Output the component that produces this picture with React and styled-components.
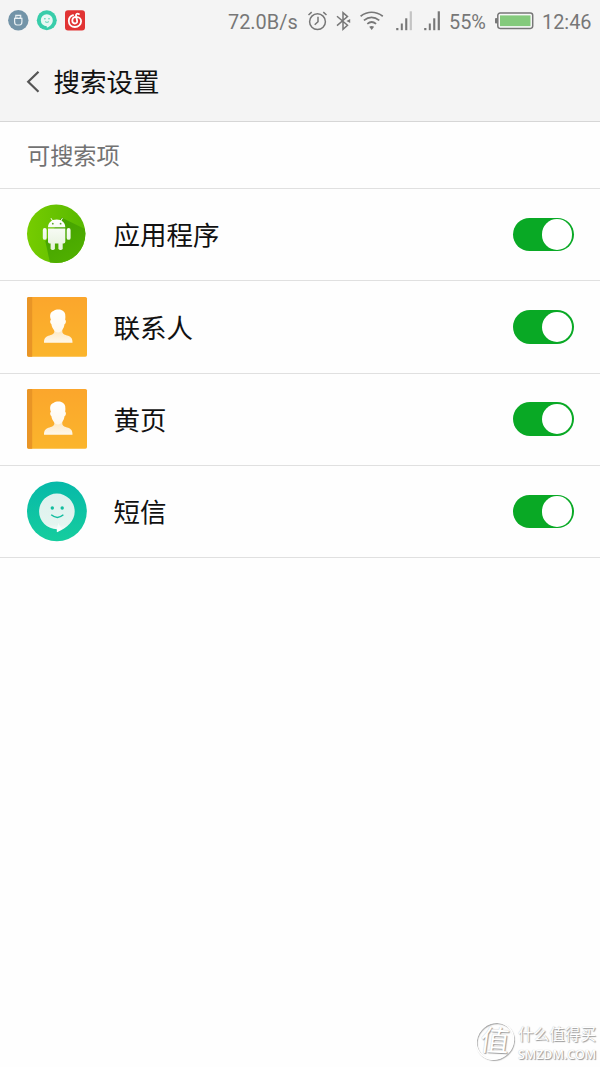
import React from "react";
import styled, { createGlobalStyle } from "styled-components";

const GlobalStyle = createGlobalStyle`
  body { margin: 0; background: #fff; }
  * { box-sizing: border-box; }
  svg { display: block; flex: none; overflow: visible; }
`;

const Screen = styled.main`
  position: relative;
  width: 600px;
  height: 1067px;
  overflow: hidden;
  background: #fefefe;
  color: #111;
  font-family: Roboto, "Noto Sans CJK SC", sans-serif;
`;
const Top = styled.header`
  height: 122px;
  background: #f4f4f4;
  border-bottom: 1.5px solid #d6d6d6;
`;
const StatusBar = styled.div`
  display: flex;
  justify-content: space-between;
  height: 42px;
  padding: 0 8px;
`;
const Notifications = styled.div`
  display: flex;
  align-items: center;
  gap: 8px;
  height: 41px;
`;
const Indicators = styled.div`
  display: flex;
  align-items: center;
  width: 364px;
  height: 42px;
`;
const StatusText = styled.span`
  width: ${(p) => p.$width}px;
  margin-right: ${(p) => p.$gap || 0}px;
  font-size: 19.9px;
  line-height: 24px;
  padding-top: 4px;
  color: #777;
  white-space: nowrap;
`;
const IndicatorSlot = styled.span`
  margin-right: ${(p) => p.$gap}px;
`;
const TitleBar = styled.div`
  display: flex;
  align-items: center;
  height: 78px;
  padding: 1px 0 0 26px;
`;
const Title = styled.h1`
  margin: 0 0 0 13.5px;
  padding-top: 2px;
  font-size: 26.5px;
  line-height: 40px;
  font-weight: 400;
`;
const SectionLabel = styled.h2`
  display: flex;
  align-items: center;
  margin: 0;
  height: 67px;
  padding: 0 0 2.5px 27px;
  font-size: 23.2px;
  font-weight: 400;
  color: #727272;
  border-bottom: 1px solid #e0e0e0;
`;
const List = styled.ul`
  margin: 0;
  padding: 0;
  list-style: none;
`;
const Row = styled.li`
  display: flex;
  align-items: center;
  height: 92.3px;
  padding: 0 26px 0 26.5px;
  border-bottom: 1px solid #e0e0e0;
`;
const RowLabel = styled.span`
  flex: 1;
  margin-left: 27px;
  font-size: 26.5px;
  line-height: 40px;
  padding-top: 3.2px;
`;
const Switch = styled.button`
  display: flex;
  justify-content: flex-end;
  align-items: center;
  width: 61px;
  height: 33.5px;
  padding: 0 2px;
  border: 0;
  border-radius: 17px;
  background: #09a925;
`;
const Knob = styled.span`
  width: 30.5px;
  height: 30.5px;
  border-radius: 50%;
  background: #fff;
`;
const Watermark = styled.div`
  position: absolute;
  left: 476px;
  bottom: 3px;
  display: flex;
  align-items: center;
  gap: 4px;
  color: #fff;
  text-shadow: 1px 1px 1px #999, 0 0 1px #bbb;
`;
const Seal = styled.span`
  display: flex;
  align-items: center;
  justify-content: center;
  width: 38px;
  height: 38px;
  border: 1.5px solid #fff;
  border-radius: 50%;
  box-shadow: 1px 1px 1px #aaa, inset 1px 1px 1px #aaa;
  font-size: 29px;
  line-height: 34px;
  transform: rotate(3deg) skewX(-5deg);
`;
const Brand = styled.span`
  display: flex;
  flex-direction: column;
  padding-top: 8px;
  font-size: 15.6px;
  font-weight: 400;
  line-height: 21px;
  white-space: nowrap;
`;
const Domain = styled.span`
  font-family: "Open Sans", sans-serif;
  font-size: 12.4px;
  font-weight: 600;
  line-height: 18px;
`;

const UsbIcon = () => (
  <svg width="21" height="21" viewBox="0 0 21 21">
    <circle cx="10.3" cy="10.3" r="10.2" fill="#7394a8" />
    <g fill="none" stroke="#e8eff2" strokeWidth="1.2">
      <path d="M7.8 8.3V5.4h4.9v2.9M6.6 8.4h7.3v3.4c0 2-.9 3.2-2.3 3.2H8.9c-1.4 0-2.3-1.2-2.3-3.2Z" />
      <path d="M9.3 6.7v.8M11.3 6.7v.8" />
    </g>
  </svg>
);
const ChatBadge = () => (
  <svg width="20" height="21" viewBox="0 0 20 21">
    <circle cx="9.8" cy="10.3" r="10" fill="#38cdaa" />
    <path d="M9.8 4.2a6 6 0 1 0 0 12v1.5c3.5-1.2 6-4 6-7.5a6 6 0 0 0-6-6Z" fill="#e9f8f4" />
    <circle cx="7.9" cy="8.8" r=".7" fill="#38cdaa" />
    <circle cx="12" cy="8.8" r=".7" fill="#38cdaa" />
    <path d="M8 11.7q2 1.4 4 0" fill="none" stroke="#38cdaa" strokeWidth=".8" />
  </svg>
);
const MusicIcon = () => (
  <svg width="20" height="21" viewBox="0 0 20 21">
    <rect y=".2" width="20" height="20.3" rx="3" fill="#e13434" />
    <path d="M8.1 5.2C5.2 6.1 3.8 8.4 3.8 11c0 3.5 2.6 6 6.1 6s6.2-2.5 6.2-5.7c0-2.6-2.1-4.5-4.8-4.5-2.4 0-4 1.6-4 3.8 0 1.8 1.1 2.9 2.5 2.9 1.6 0 2.6-1.1 2.3-2.7L11 5.8c-.3-1.7.9-2.7 2.9-1.7" fill="none" stroke="#fff" strokeWidth="1.8" strokeLinecap="round" />
  </svg>
);
const AlarmIcon = () => (
  <svg width="20" height="20" viewBox="0 0 20 20" fill="none" stroke="#777" strokeWidth="1.5">
    <circle cx="9.5" cy="10.7" r="7.9" />
    <path d="M10 5.7v5l-3.3 3.1M.5 4l3.2-2.9M15.3 1.1 18.5 4" />
  </svg>
);
const BluetoothIcon = () => (
  <svg width="15" height="20" viewBox="0 0 15 20" fill="none" stroke="#777" strokeWidth="1.5">
    <path d="m1 5.3 10.5 9L7 18.4V1.6l4.5 4-10.5 9" />
    <path d="m10.4 10 3.8-2v4Z" fill="#777" stroke="none" />
  </svg>
);
const WifiIcon = () => (
  <svg width="24" height="20" viewBox="0 0 24 20" fill="none" stroke="#777" strokeWidth="1.7">
    <path d="M.6 5.2Q11.5-2.7 22.8 5.2M3.9 9.3q7.6-6 15.4 0M7.3 12.8q4.4-3.6 8.8 0" />
    <path d="M9.2 15.8q2.5-1.6 4.9 0l-2.4 3.2Z" fill="#777" stroke="none" />
  </svg>
);
const SignalIcon = ({ last }) => (
  <svg width="17" height="20" viewBox="0 0 17 20" fill="#777">
    <rect x=".2" y="17" width="2.2" height="2.2" />
    <rect x="4.8" y="12.5" width="2" height="6.7" />
    <rect x="9.2" y="7.3" width="2.1" height="11.9" />
    <rect x="13.7" y=".3" width="2.2" height="18.9" fill={last} />
  </svg>
);
const BatteryIcon = () => (
  <svg width="39" height="18" viewBox="0 0 39 18">
    <rect x="2.8" y="1" width="34.9" height="15.4" rx="2.3" fill="#f8f8f8" stroke="#777" strokeWidth="1.5" />
    <rect x="0" y="6" width="2.3" height="5.5" rx="1" fill="#777" />
    <rect x="5" y="3.4" width="30.5" height="10.7" fill="#84ca7c" />
  </svg>
);
const BackIcon = () => (
  <svg width="14" height="22" viewBox="0 0 14 22" fill="none" stroke="#555" strokeWidth="2.2">
    <path d="M12.5.8 2.2 10.8l10.3 10" />
  </svg>
);
const AndroidIcon = () => (
  <svg width="60" height="60" viewBox="0.6 0.4 60 60">
    <defs>
      <linearGradient id="appGreen" x1="0" x2="1"><stop stopColor="#76cc00" /><stop offset="1" stopColor="#57b800" /></linearGradient>
      <linearGradient id="appBody" gradientUnits="userSpaceOnUse" x1="0" y1="15" x2="0" y2="46"><stop stopColor="#fff" /><stop offset="1" stopColor="#e4f1da" /></linearGradient>
      <linearGradient id="appShade" x1="0" y1="0" x2=".5" y2="1"><stop stopColor="#429f00" /><stop offset="1" stopColor="#50b000" /></linearGradient>
      <clipPath id="appDisk"><circle cx="29.8" cy="29.2" r="29.2" /></clipPath>
    </defs>
    <circle cx="29.8" cy="29.2" r="29.2" fill="url(#appGreen)" />
    <path clipPath="url(#appDisk)" d="M35 13 60 25v35H24l-5-23Z" fill="url(#appShade)" />
    <g fill="url(#appBody)">
      <path d="M21.6 22.6C21.8 18.3 25 15 30.3 15s8.4 3.3 8.6 7.6Z" />
      <path d="M21.6 23.8h17.3v13.4q0 1.7-1.7 1.7H23.3q-1.7 0-1.7-1.7Z" />
      <rect x="16.4" y="23.5" width="3.9" height="11.7" rx="1.9" />
      <rect x="40.3" y="23.5" width="3.9" height="11.7" rx="1.9" />
      <rect x="24.2" y="36" width="4.3" height="9.5" rx="1.8" />
      <rect x="32" y="36" width="4.3" height="9.5" rx="1.8" />
    </g>
    <path d="m24.6 13.6 2 3.4M36 13.6l-2 3.4" stroke="#fff" strokeWidth="1" />
    <g fill="#58a72c"><circle cx="26.4" cy="19.1" r=".9" /><circle cx="34.2" cy="19.1" r=".9" /></g>
  </svg>
);
const ContactIcon = () => (
  <svg width="60" height="60" viewBox="0.3 0.3 60 60">
    <defs>
      <linearGradient id="contactOrange" x1="0" y1="0" x2="0" y2="1"><stop stopColor="#fba62c" /><stop offset="1" stopColor="#fbb52c" /></linearGradient>
      <linearGradient id="contactSkin" x1="0" y1="0" x2="0" y2="1"><stop stopColor="#fff" /><stop offset="1" stopColor="#fff8ec" /></linearGradient>
      <linearGradient id="contactShoulders" x1="0" y1="0" x2="0" y2="1"><stop stopColor="#fce3b8" /><stop offset="1" stopColor="#fff8ea" /></linearGradient>
    </defs>
    <rect x=".3" y=".2" width="60" height="59.8" rx="1.6" fill="url(#contactOrange)" />
    <path d="M2 .2h3.5V60H2Q.3 60 .3 58V2Q.3.2 2 .2Z" fill="#e99526" />
    <path d="M17.3 46c0-4.1 1.4-5.7 4.4-6.9 3.3-1.2 5.9-1.8 5.9-4.4V30h8v4.7c0 2.6 2.6 3.2 5.9 4.4 3 1.2 4.3 2.8 4.3 6.9Z" fill="url(#contactShoulders)" />
    <path d="M24.7 27.6c-1.3-1.1-1.8-3.7-.5-4.6-1.6-4.2-.7-7.8 2.5-8.8 4.4-2.8 11-1.3 11.8 3.4.3 1.8.2 3.7 0 5.4 1.3.9.8 3.7-.7 4.6-.4 2.8-1.1 4-2 5.3-1.5 2.3-2.9 2.9-4.4 2.9s-2.9-.6-4.2-2.4c-1.1-1.6-2.2-3-2.5-5.8Z" fill="url(#contactSkin)" />
  </svg>
);
const MessageIcon = () => (
  <svg width="60" height="60" viewBox="0.3 0.5 60 60">
    <defs>
      <linearGradient id="messageTeal" x1="0" y1="0" x2="0" y2="1"><stop stopColor="#06b9a9" /><stop offset="1" stopColor="#16cd9e" /></linearGradient>
      <linearGradient id="messageBubble" x1="0" y1="0" x2="0" y2="1"><stop stopColor="#def1ee" /><stop offset=".8" stopColor="#e4f5f0" /><stop offset="1" stopColor="#fff" /></linearGradient>
    </defs>
    <circle cx="30.2" cy="29.9" r="29.9" fill="url(#messageTeal)" />
    <path d="M30.2 12.1a17.8 17.8 0 1 0 0 35.6v3C40.7 46.5 48 39.3 48 29.9a17.8 17.8 0 0 0-17.8-17.8Z" fill="url(#messageBubble)" />
    <path d="M30.2 47.7q.7-3.6 1.4-6.1l3.4 5.8-4.8 3.3Z" fill="#fff" opacity=".55" />
    <g fill="#13bd9f"><circle cx="25.6" cy="26.5" r="1.7" /><circle cx="35.5" cy="26.5" r="1.7" /></g>
    <path d="M24.5 33.3q6.2 5.2 12.2 0" fill="none" stroke="#13bd9f" strokeWidth="1.4" />
  </svg>
);

const items = [
  ["应用程序", AndroidIcon],
  ["联系人", ContactIcon],
  ["黄页", ContactIcon],
  ["短信", MessageIcon],
];

export default function App() {
  return (
    <Screen>
      <GlobalStyle />
      <Top>
        <StatusBar>
          <Notifications><UsbIcon /><ChatBadge /><MusicIcon /></Notifications>
          <Indicators>
            <StatusText $width={69} $gap={11}>72.0B/s</StatusText>
            <IndicatorSlot $gap={8}><AlarmIcon /></IndicatorSlot>
            <IndicatorSlot $gap={9}><BluetoothIcon /></IndicatorSlot>
            <IndicatorSlot $gap={12}><WifiIcon /></IndicatorSlot>
            <IndicatorSlot $gap={11}><SignalIcon last="#c4c4c4" /></IndicatorSlot>
            <IndicatorSlot $gap={8}><SignalIcon last="#777" /></IndicatorSlot>
            <StatusText $width={37} $gap={9}>55%</StatusText>
            <IndicatorSlot $gap={8}><BatteryIcon /></IndicatorSlot>
            <StatusText $width={50}>12:46</StatusText>
          </Indicators>
        </StatusBar>
        <TitleBar><BackIcon /><Title>搜索设置</Title></TitleBar>
      </Top>
      <SectionLabel>可搜索项</SectionLabel>
      <List>
        {items.map(([label, Icon]) => (
          <Row key={label}>
            <Icon />
            <RowLabel>{label}</RowLabel>
            <Switch role="switch" aria-checked="true" aria-label={label}><Knob /></Switch>
          </Row>
        ))}
      </List>
      <Watermark>
        <Seal>值</Seal>
        <Brand>什么值得买<Domain>SMZDM.COM</Domain></Brand>
      </Watermark>
    </Screen>
  );
}
